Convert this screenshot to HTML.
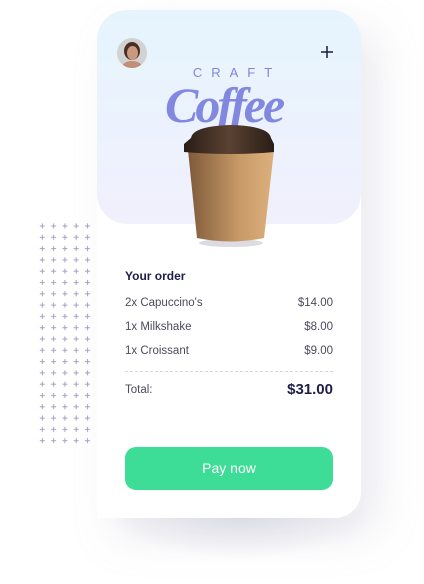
<!DOCTYPE html>
<html><head><style>
body{margin:0;width:424px;height:584px;background:#fff;position:relative;overflow:hidden;font-family:"Liberation Sans",sans-serif}
.shadow{position:absolute;left:110px;top:470px;width:260px;height:90px;background:radial-gradient(ellipse at center,rgba(200,200,215,.45),rgba(255,255,255,0) 70%);}
.card{position:absolute;left:97px;top:10px;width:264px;height:508px;background:#fff;border-radius:30px 30px 26px 0;box-shadow:18px 18px 40px rgba(180,180,200,.25)}
.top{position:absolute;left:0;top:0;width:264px;height:214px;border-radius:30px;background:linear-gradient(#e6f5fd,#f1f0fd)}
.t{position:absolute;font-size:11.5px;color:#4b4b5e}
.r{right:28px}
</style></head><body>
<div class="shadow"></div>
<svg style="position:absolute;left:36px;top:220px" width="60" height="230">
<defs><pattern id="pp" x="0" y="0" width="11.3" height="11.3" patternUnits="userSpaceOnUse"><path d="M6.3 3.5v5M3.8 6h5" stroke="#a3a2bd" stroke-width="1" fill="none"/></pattern></defs>
<rect x="0" y="0" width="57" height="226" fill="url(#pp)"/>
</svg>
<div class="card">
<div class="top"></div>
<div style="position:absolute;left:20px;top:28px;width:30px;height:30px;border-radius:50%;background:#d2d2d2;overflow:hidden">
<div style="position:absolute;left:7px;top:4px;width:16px;height:18px;border-radius:50%;background:#4a3024"></div>
<div style="position:absolute;left:10px;top:8px;width:11px;height:14px;border-radius:50%;background:#c99a80"></div>
<div style="position:absolute;left:5px;top:23px;width:20px;height:12px;border-radius:50%;background:#c08f76"></div>
</div>
<svg style="position:absolute;left:224px;top:36px" width="12" height="12"><path d="M6 0V12M0 6H12" stroke="#1b1b3a" stroke-width="1.5"/></svg>
<div style="position:absolute;left:0;width:264px;top:55px;text-align:center;font-size:13px;letter-spacing:9px;color:#7f86dd;padding-left:8px">CRAFT</div>
<div style="position:absolute;left:68px;top:66px;font-family:'Liberation Serif',serif;font-style:italic;font-weight:bold;font-size:50px;color:#8288e0;letter-spacing:-3px">Coffee</div>
<svg style="position:absolute;left:80px;top:110px" width="110" height="130">
<defs>
<linearGradient id="b" x1="0" x2="1"><stop offset="0" stop-color="#7e5a3a"/><stop offset=".6" stop-color="#c89a68"/><stop offset="1" stop-color="#dcb07c"/></linearGradient>
<linearGradient id="l" x1="0" x2="1"><stop offset="0" stop-color="#2a1d16"/><stop offset=".5" stop-color="#5a4232"/><stop offset="1" stop-color="#2a1d16"/></linearGradient>
</defs>
<ellipse cx="54" cy="123" rx="32" ry="4" fill="rgba(120,110,140,.25)"/>
<path d="M11 30 L97 30 L87 118 Q54 125 20 118 Z" fill="url(#b)"/>
<path d="M14 18 Q16 6 54 5 Q92 6 94 18 L97 24 L97 32 Q54 36 7 32 L7 24 Z" fill="url(#l)"/>
</svg>
<div style="position:absolute;left:28px;top:259px;font-size:12px;font-weight:bold;color:#1e1e4a">Your order</div>
<div class="t" style="left:28px;top:287px">2x Capuccino's</div><div class="t r" style="top:287px">$14.00</div>
<div class="t" style="left:28px;top:311px">1x Milkshake</div><div class="t r" style="top:311px">$8.00</div>
<div class="t" style="left:28px;top:335px">1x Croissant</div><div class="t r" style="top:335px">$9.00</div>
<div style="position:absolute;left:28px;right:28px;top:361px;border-top:1px dashed #d5d5de"></div>
<div class="t" style="left:28px;top:374px">Total:</div>
<div style="position:absolute;right:28px;top:371px;font-size:15px;font-weight:bold;color:#1e1e4a">$31.00</div>
<div style="position:absolute;left:28px;top:437px;width:208px;height:43px;border-radius:11px;background:#3ddc97;color:#fff;font-size:14px;text-align:center;line-height:43px">Pay now</div>
</div>
</body></html>
